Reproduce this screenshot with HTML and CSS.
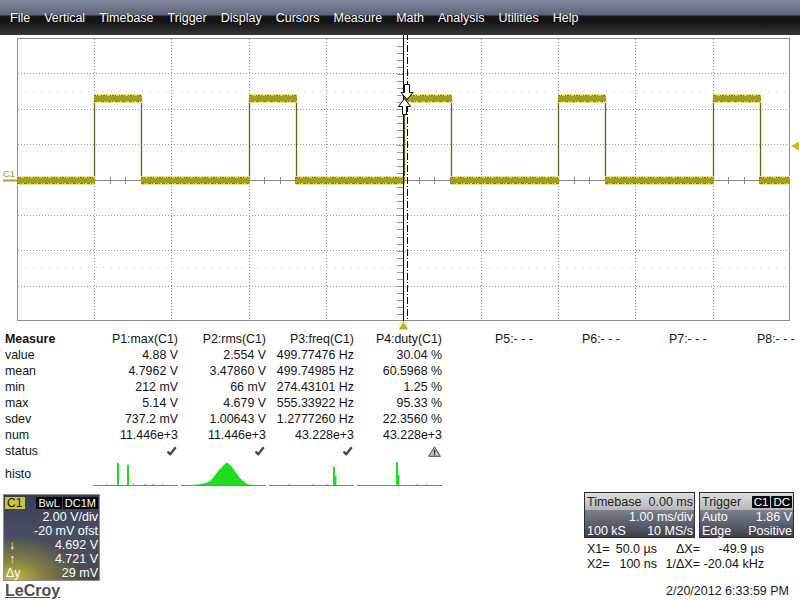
FILE: index.html
```html
<!DOCTYPE html>
<html>
<head>
<meta charset="utf-8">
<link rel="stylesheet" href="styles.css">
</head>
<body>
<div class="menubar">
  <span>File</span><span>Vertical</span><span>Timebase</span><span>Trigger</span><span>Display</span><span>Cursors</span><span>Measure</span><span>Math</span><span>Analysis</span><span>Utilities</span><span>Help</span>
</div>

<svg class="scope" width="800" height="295" viewBox="0 35 800 295">
  <rect x="17.5" y="38.5" width="772" height="282" fill="#fff" stroke="#8c8c8c"/>
  <g stroke="#9a9a9a" stroke-dasharray="1 2" shape-rendering="crispEdges">
    <path d="M94.5,39V321 M171.5,39V321 M249.5,39V321 M326.5,39V321 M481.5,39V321 M558.5,39V321 M635.5,39V321 M713.5,39V321"/>
    <path d="M18,73.5H790 M18,109.5H790 M18,144.5H790 M18,215.5H790 M18,250.5H790 M18,286.5H790"/>
  </g>
  <g stroke="#cfcfcf" stroke-dasharray="1 6.73" shape-rendering="crispEdges">
    <path d="M26,91.5H790 M26,267.5H790"/>
  </g>
  <g stroke="#8a8a8a" shape-rendering="crispEdges">
    <path d="M18,180.5H790"/>
    <path d="M403.5,39V321"/>
    <path d="M32.5,180.5H790" stroke-width="7" stroke-dasharray="1 14.46"/>
    <path d="M400,45.5V321" stroke-width="7" stroke-dasharray="1 6.075" stroke="#9a9a9a"/>
  </g>

  <path d="M17,180.5H94.5V98.5H141.5V180.5H249.5V98.5H296.5V180.5H404.5V98.5H451.5V180.5H558.5V98.5H605.5V180.5H713.5V98.5H760.5V180.5H790" fill="none" stroke="#66621c" stroke-width="1.3"/>
  <g fill="none">
    <path d="M17,180.5H95 M141,180.5H250 M296,180.5H405 M451,180.5H559 M605,180.5H714 M760,180.5H790 M94,98.5H142 M249,98.5H297 M404,98.5H452 M558,98.5H606 M713,98.5H761" stroke="#e6e28e" stroke-width="9"/>
    <path d="M17,180.5H95 M141,180.5H250 M296,180.5H405 M451,180.5H559 M605,180.5H714 M760,180.5H790 M94,98.5H142 M249,98.5H297 M404,98.5H452 M558,98.5H606 M713,98.5H761" stroke="#a39f1a" stroke-width="5.5"/>
    <path d="M17,177.5H95 M141,177.5H250 M296,177.5H405 M451,177.5H559 M605,177.5H714 M760,177.5H790 M94,95.5H142 M249,95.5H297 M404,95.5H452 M558,95.5H606 M713,95.5H761" stroke="#7c7808" stroke-width="1" stroke-dasharray="2 1 1 3 1 1"/>
    <path d="M17,183.5H95 M141,183.5H250 M296,183.5H405 M451,183.5H559 M605,183.5H714 M760,183.5H790 M94,101.5H142 M249,101.5H297 M404,101.5H452 M558,101.5H606 M713,101.5H761" stroke="#86820c" stroke-width="1" stroke-dasharray="3 1 1 2"/>
  </g>

  <path d="M403.5,33V321" stroke="#000" stroke-width="1"/>
  <path d="M407.5,33V321" stroke="#000" stroke-width="1" stroke-dasharray="7 2 1 2"/>
  <g fill="#fff" stroke="#000" stroke-width="1">
    <path d="M404.5,84.5h5v8h3.5l-6,7l-6,-7h3.5z"/>
    <path d="M402.5,114.5v-8h-4l6,-8l6,8h-4v8z"/>
  </g>

  <text x="3" y="177" class="c1lbl">C1</text>
  <path d="M3,180.5H17" stroke="#a8a430" stroke-width="2"/>
  <polygon points="791,146 799,141.5 799,150.5" fill="#c4bc2c"/>
  <circle cx="403.5" cy="326" r="5" fill="#f2efb0" opacity="0.8"/>
  <polygon points="403.5,322 399,329.5 408,329.5" fill="#b8b02a"/>
</svg>

<div class="meas">
  <div class="mrow head"><span class="lbl">Measure</span><span class="v">P1:max(C1)</span><span class="v">P2:rms(C1)</span><span class="v">P3:freq(C1)</span><span class="v">P4:duty(C1)</span><span></span><span>P5:- - -</span><span>P6:- - -</span><span>P7:- - -</span><span>P8:- - -</span></div>
  <div class="mrow"><span>value</span><span class="v">4.88 V</span><span class="v">2.554 V</span><span class="v">499.77476 Hz</span><span class="v">30.04 %</span></div>
  <div class="mrow"><span>mean</span><span class="v">4.7962 V</span><span class="v">3.47860 V</span><span class="v">499.74985 Hz</span><span class="v">60.5968 %</span></div>
  <div class="mrow"><span>min</span><span class="v">212 mV</span><span class="v">66 mV</span><span class="v">274.43101 Hz</span><span class="v">1.25 %</span></div>
  <div class="mrow"><span>max</span><span class="v">5.14 V</span><span class="v">4.679 V</span><span class="v">555.33922 Hz</span><span class="v">95.33 %</span></div>
  <div class="mrow"><span>sdev</span><span class="v">737.2 mV</span><span class="v">1.00643 V</span><span class="v">1.2777260 Hz</span><span class="v">22.3560 %</span></div>
  <div class="mrow"><span>num</span><span class="v">11.446e+3</span><span class="v">11.446e+3</span><span class="v">43.228e+3</span><span class="v">43.228e+3</span></div>
  <div class="mrow"><span>status</span>
    <span class="v ico"><svg width="11" height="10" viewBox="0 0 11 10"><path d="M1.5,5.5L4.2,8.2L9.8,1.2" fill="none" stroke="#454545" stroke-width="2.3"/></svg></span>
    <span class="v ico"><svg width="11" height="10" viewBox="0 0 11 10"><path d="M1.5,5.5L4.2,8.2L9.8,1.2" fill="none" stroke="#454545" stroke-width="2.3"/></svg></span>
    <span class="v ico"><svg width="11" height="10" viewBox="0 0 11 10"><path d="M1.5,5.5L4.2,8.2L9.8,1.2" fill="none" stroke="#454545" stroke-width="2.3"/></svg></span>
    <span class="v ico"><svg width="13" height="11" viewBox="0 0 13 11"><polygon points="6.5,0.8 12.3,10.3 0.7,10.3" fill="#c4c4c4" stroke="#4a4a4a" stroke-width="1"/><rect x="5.8" y="3.6" width="1.5" height="4" fill="#333"/><rect x="5.8" y="8.2" width="1.5" height="1.3" fill="#333"/></svg></span>
  </div>
  <div class="mrow histo"><span>histo</span>
    <span class="hc"><svg width="85" height="30" viewBox="0 0 85 30">
      <path d="M0,26.5H85" stroke="#4aa84a" stroke-width="1"/>
      <path d="M14,26V25 M40,26V25 M52,26V25 M60,26V25 M70,26V25" stroke="#3fbf3f"/>
      <rect x="24" y="4" width="2" height="22" fill="#1ede1e"/>
      <rect x="34" y="6" width="2" height="20" fill="#1ede1e"/>
    </svg></span>
    <span class="hc"><svg width="85" height="30" viewBox="0 0 85 30">
      <path d="M0,26.5H85" stroke="#4aa84a" stroke-width="1"/>
      <polygon points="12,26 20,25 25,24 29,22 32,19 35,15 38,11 41,8 43,6 45,4 47,4 49,6 51,8 53,11 56,15 59,19 62,22 66,25 72,26" fill="#1ede1e"/>
    </svg></span>
    <span class="hc"><svg width="85" height="30" viewBox="0 0 85 30">
      <path d="M0,26.5H85" stroke="#4aa84a" stroke-width="1"/>
      <path d="M20,26V25 M44,26V25 M58,26V25" stroke="#3fbf3f"/>
      <rect x="64" y="8" width="2" height="18" fill="#1ede1e"/>
      <rect x="66" y="17" width="1.5" height="9" fill="#1ede1e"/>
    </svg></span>
    <span class="hc"><svg width="85" height="30" viewBox="0 0 85 30">
      <path d="M0,26.5H85" stroke="#4aa84a" stroke-width="1"/>
      <path d="M60,26V25 M70,26V25" stroke="#3fbf3f"/>
      <rect x="39" y="3" width="2" height="23" fill="#1ede1e"/>
      <rect x="41" y="16" width="1.5" height="10" fill="#1ede1e"/>
    </svg></span>
  </div>
</div>

<div class="bottom">
  <div class="leftcol">
    <div class="chan">
      <div class="chan-top"><span class="c1tag">C1</span><span class="tags"><span class="blk">BwL</span><span class="blk">DC1M</span></span></div>
      <div class="chan-row"><span></span><span>2.00 V/div</span></div>
      <div class="chan-row"><span></span><span>-20 mV ofst</span></div>
      <div class="chan-row"><span class="arr">↓</span><span>4.692 V</span></div>
      <div class="chan-row"><span class="arr">↑</span><span>4.721 V</span></div>
      <div class="chan-row"><span>Δy</span><span>29 mV</span></div>
    </div>
    <div class="logo">LeCroy</div>
  </div>
  <div class="rightcol">
    <div class="boxes">
      <div class="box tb">
        <div class="hd"><span>Timebase</span><span>0.00 ms</span></div>
        <div class="bd">
          <div class="r"><span></span><span>1.00 ms/div</span></div>
          <div class="r"><span>100 kS</span><span>10 MS/s</span></div>
        </div>
      </div>
      <div class="box trig">
        <div class="hd"><span>Trigger</span><span class="tags"><span class="blk">C1</span><span class="blk">DC</span></span></div>
        <div class="bd">
          <div class="r"><span>Auto</span><span>1.86 V</span></div>
          <div class="r"><span>Edge</span><span>Positive</span></div>
        </div>
      </div>
    </div>
    <div class="curs">
      <span>X1=</span><span class="v">50.0 µs</span><span class="v">ΔX=</span><span class="v">-49.9 µs</span>
      <span>X2=</span><span class="v">100 ns</span><span class="v">1/ΔX=</span><span class="v">-20.04 kHz</span>
    </div>
    <div class="date">2/20/2012 6:33:59 PM</div>
  </div>
</div>
</body>
</html>
```

FILE: styles.css
```css
* { box-sizing: border-box; margin: 0; padding: 0; }
html, body { margin: 0; }
body {
  width: 800px;
  height: 600px;
  overflow: hidden;
  background: #fff;
  font-family: "Liberation Sans", Arial, sans-serif;
  color: #111;
}

.menubar {
  height: 35px;
  display: flex;
  align-items: center;
  gap: 14px;
  padding-left: 10px;
  font-size: 12.5px;
  color: #fff;
  background: linear-gradient(to bottom, #868aa0 0px, #5f6378 15px, #161616 16px, #141414 21px, #363636 35px);
}
.menubar span {
  padding-top: 1px;
  text-shadow: 0 0 1px rgba(0,0,0,0.7);
}

.scope { display: block; }
.c1lbl { font-family: "Liberation Sans", Arial, sans-serif; font-size: 9.5px; fill: #9c9830; }

.meas { padding-top: 1px; font-size: 12.4px; color: #141414; }
.mrow {
  display: grid;
  grid-template-columns: 88px 85px 88px 88px 88px 53px 87px 87px 88px 43px;
  height: 16px;
  line-height: 16px;
  padding-left: 5px;
  white-space: nowrap;
}
.mrow .v { text-align: right; }
.mrow.head .lbl { font-weight: bold; }
.mrow .ico { display: flex; justify-content: flex-end; align-items: center; padding-right: 1px; }
.mrow.histo { height: 30px; line-height: 30px; }
.mrow .hc { display: flex; justify-content: flex-end; }
.mrow .hc svg { display: block; }

.bottom {
  height: 111px;
  display: flex;
  justify-content: space-between;
}
.leftcol { padding: 5px 0 0 3px; }
.chan {
  width: 97px;
  height: 87px;
  border: 1px solid #8e8e8e;
  color: #fff;
  font-size: 12.5px;
  background:
    radial-gradient(ellipse 95% 65% at 8% 100%, rgba(205,196,64,0.95) 0%, rgba(160,154,62,0.7) 35%, rgba(90,92,96,0) 80%),
    linear-gradient(to bottom, #383e58 0%, #4a4e62 45%, #484848 100%);
}
.chan-top {
  height: 15px;
  display: flex;
  justify-content: space-between;
  align-items: center;
  padding: 1px 1px 0 1px;
}
.c1tag {
  background: #cbc43e;
  color: #1c1c1c;
  font-size: 12px;
  line-height: 12px;
  padding: 0 3px 0 2px;
}
.tags { display: flex; gap: 1px; }
.blk {
  background: #050505;
  color: #fff;
  font-size: 11px;
  line-height: 12px;
  padding: 0 2px;
  border-radius: 1px;
}
.chan-row {
  height: 14px;
  line-height: 14px;
  display: flex;
  justify-content: space-between;
  padding: 0 1px 0 2px;
  white-space: nowrap;
}
.chan-row .arr { padding-left: 3px; }
.logo {
  margin-top: 2px;
  padding-left: 2px;
  font-size: 16px;
  line-height: 16px;
  font-weight: bold;
  color: #4e4e4e;
  text-decoration: underline;
}

.rightcol { width: 216px; padding-top: 3px; }
.boxes { display: flex; gap: 4px; }
.box {
  border: 1px solid #2e2e2e;
  font-size: 12.5px;
  white-space: nowrap;
}
.tb { width: 111px; }
.trig { width: 95px; }
.box .hd {
  height: 17px;
  display: flex;
  justify-content: space-between;
  align-items: center;
  padding: 0 1px 0 2px;
  color: #1e1e1e;
  background: linear-gradient(to bottom, #dedede, #b6b6b6);
}
.box .bd {
  height: 27px;
  color: #fff;
  background: linear-gradient(to bottom, #7c808e 0%, #5c606c 50%, #3c3f4a 100%);
  padding: 0 1px 0 2px;
}
.box .r {
  height: 13.5px;
  line-height: 14px;
  display: flex;
  justify-content: space-between;
}
.trig .hd .blk { font-size: 11.5px; }

.curs {
  margin-top: 4px;
  padding-left: 3px;
  display: grid;
  grid-template-columns: 26px 44px 43px 64px;
  grid-auto-rows: 15px;
  line-height: 15px;
  font-size: 12.5px;
  color: #111;
  white-space: nowrap;
}
.curs .v { text-align: right; }
.date {
  margin-top: 12px;
  padding-left: 82px;
  font-size: 12.5px;
  line-height: 14px;
  color: #1a1a1a;
  white-space: nowrap;
}
```
